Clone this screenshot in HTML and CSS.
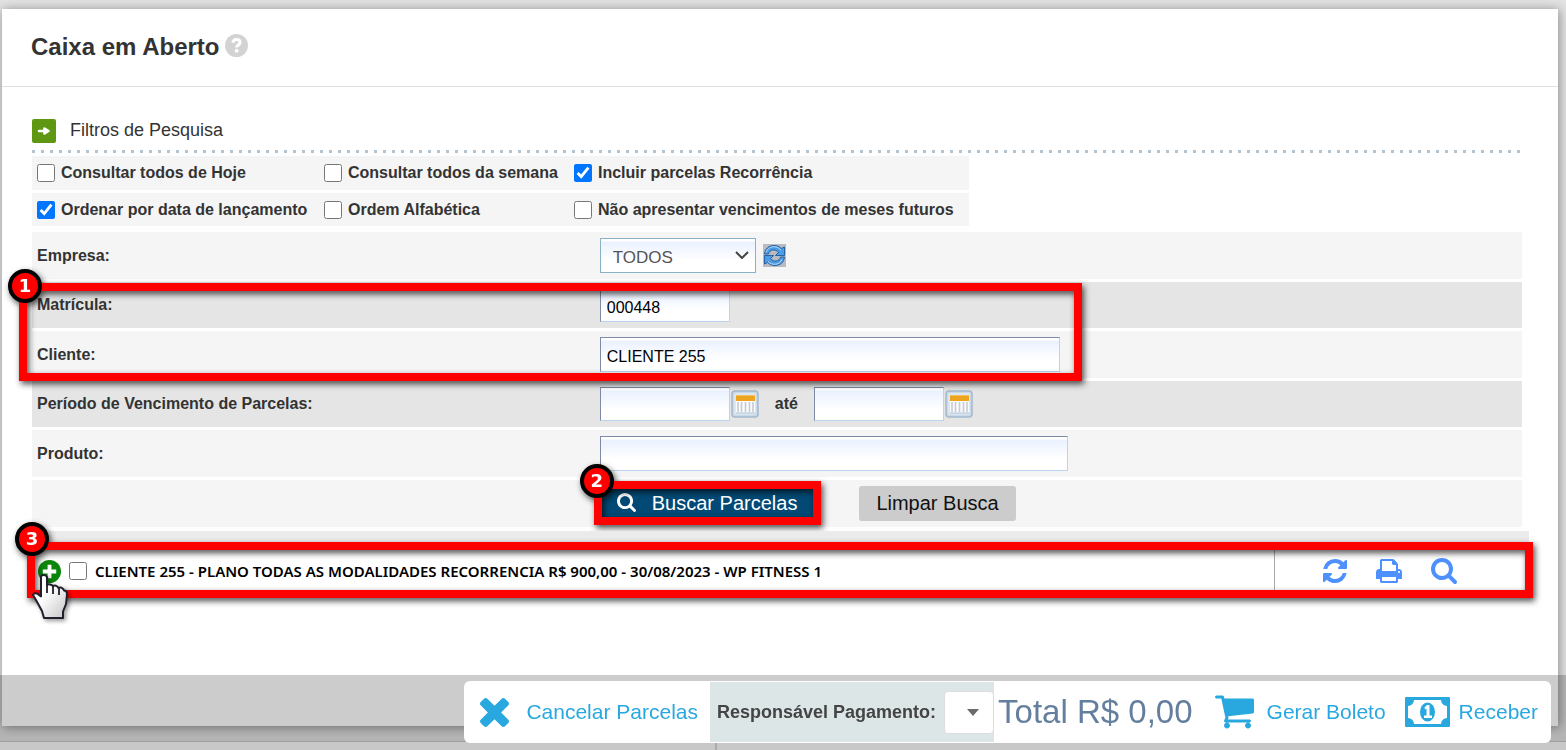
FILE: index.html
```html
<!DOCTYPE html>
<html lang="pt-BR">
<head>
<meta charset="utf-8">
<meta name="viewport" content="width=device-width, initial-scale=1">
<title>Caixa em Aberto</title>
<link rel="stylesheet" href="styles.css">
</head>
<body>
<svg class="defs" aria-hidden="true">
  <symbol id="i-search" viewBox="64 128 1664 1664"><path d="M1216 832q0-185-131.5-316.5t-316.5-131.5-316.5 131.5-131.5 316.5 131.5 316.5 316.5 131.5 316.5-131.5 131.5-316.5zm512 832q0 52-38 90t-90 38q-54 0-90-38l-343-342q-179 124-399 124-143 0-273.5-55.5t-225-150-150-225-55.5-273.5 55.5-273.5 150-225 225-150 273.5-55.5 273.5 55.5 225 150 150 225 55.5 273.5q0 220-124 399l343 343q37 37 37 90z"/></symbol>
  <symbol id="i-refresh" viewBox="128 128 1536 1536"><path d="M1639 1056q0 5-1 7-64 268-268 434.5t-478 166.500q-146 0-282.500-55t-243.500-157l-129 129q-19 19-45 19t-45-19-19-45v-448q0-26 19-45t45-19h448q26 0 45 19t19 45-19 45l-137 137q71 66 161 102t187 36q134 0 250-65t186-179q11-17 53-117 8-23 30-23h192q13 0 22.500 9.500t9.500 22.500zm25-800v448q0 26-19 45t-45 19h-448q-26 0-45-19t-19-45 19-45l138-138q-148-137-349-137-134 0-250 65t-186 179q-11 17-53 117-8 23-30 23h-199q-13 0-22.500-9.500t-9.500-22.500v-7q65-268 270-434.500t480-166.500q146 0 284 55.500t245 156.500l130-129q19-19 45-19t45 19 19 45z"/></symbol>
  <symbol id="i-print" viewBox="64 64 1664 1664"><path d="M448 1536h896v-256h-896v256zm0-640h896v-384h-160q-40 0-68-28t-28-68v-160h-640v640zm1152 64q0-26-19-45t-45-19-45 19-19 45 19 45 45 19 45-19 19-45zm128 0v416q0 13-9.500 22.500t-22.500 9.500h-224v160q0 40-28 68t-68 28h-960q-40 0-68-28t-28-68v-160h-224q-13 0-22.500-9.500t-9.500-22.500v-416q0-79 56.500-135.500t135.500-56.500h64v-544q0-40 28-68t68-28h672q40 0 88 20t76 48l152 152q28 28 48 76t20 88v256h64q79 0 135.500 56.500t56.500 135.500z"/></symbol>
  <symbol id="i-times" viewBox="302 366 1188 1188"><path d="M1490 1322q0 40-28 68l-136 136q-28 28-68 28t-68-28l-294-294-294 294q-28 28-68 28t-68-28l-136-136q-28-28-28-68t28-68l294-294-294-294q-28-28-28-68t28-68l136-136q28-28 68-28t68 28l294 294 294-294q28-28 68-28t68 28l136 136q28 28 28 68t-28 68l-294 294 294 294q28 28 28 68z"/></symbol>
  <symbol id="i-cart" viewBox="64 256 1664 1408"><path d="M704 1536q0 52-38 90t-90 38-90-38-38-90 38-90 90-38 90 38 38 90zm896 0q0 52-38 90t-90 38-90-38-38-90 38-90 90-38 90 38 38 90zm128-1088v512q0 24-16.500 42.500t-40.500 21.500l-1044 122q13 60 13 70 0 16-24 64h920q26 0 45 19t19 45-19 45-45 19h-1024q-26 0-45-19t-19-45q0-11 8-31.500t16-36 21.500-40 15.500-29.500l-177-823h-204q-26 0-45-19t-19-45 19-45 45-19h256q16 0 28.500 6.500t19.500 15.500 13 24.500 8 26 5.500 29.500 4.500 26h1201q26 0 45 19t19 45z"/></symbol>
  <symbol id="i-money" viewBox="0 0 45 30"><rect width="45" height="30" rx="1"/><path d="M9 3h27a6 6 0 0 0 6 6v12a6 6 0 0 0-6 6H9a6 6 0 0 0-6-6V9a6 6 0 0 0 6-6z" fill="#fff"/><ellipse cx="22.500" cy="15" rx="7.500" ry="9.500"/><path d="M19.500 10.500L22 8h2.500v10.500H27V21h-8v-2.500h2.500v-7L20 12.500z" fill="#fff"/></symbol>
  <symbol id="i-calendar" viewBox="0 0 28 28"><rect x="1" y="1" width="26" height="26" rx="3" fill="#c9d9e8" stroke="#a4b9cd" stroke-width="1.500"/><rect x="3" y="3" width="22" height="22" rx="2" fill="#dde7f0"/><rect x="5" y="5" width="19" height="18" fill="#fbfbfb"/><path d="M7 12v10M10.500 12v10M14.500 12v10M18.500 12v10M22 12v10" stroke="#c3cbd4" stroke-width="1.600"/><path d="M5 23h19" stroke="#adc2d6"/><rect x="5" y="5" width="19" height="6" fill="#eda421"/><path d="M5 5.500h19" stroke="#f4c05c"/></symbol>
</svg>

<main class="card">
  <header class="card-header">
    <h1>Caixa em Aberto</h1>
    <button class="help" type="button" aria-label="Ajuda">
      <svg viewBox="0 0 24 24"><circle cx="12" cy="12" r="12" fill="#d3d3d3"/><path d="M8.200 9.200C8.500 6.900 10 5.800 12 5.800c2.200 0 3.700 1.200 3.700 3 0 2.600-3.500 2.700-3.500 5.200" fill="none" stroke="#fff" stroke-width="3.200"/><rect x="10.400" y="15.800" width="3.600" height="3.400" fill="#fff"/></svg>
    </button>
  </header>

  <div class="content">
    <form class="filters">
      <h2>
        <svg viewBox="0 0 24 24"><rect width="24" height="24" rx="2" fill="#5f9713"/><path d="M7 12h8M12.500 9.500l4 2.500-4 2.500z" fill="#fff" stroke="#fff" stroke-width="2.600" stroke-linecap="round" stroke-linejoin="round"/></svg>
        <span>Filtros de Pesquisa</span>
      </h2>
      <div class="dots"></div>

      <div class="checks">
        <div class="check-row">
          <label><input type="checkbox">Consultar todos de Hoje</label>
          <label><input type="checkbox">Consultar todos da semana</label>
          <label><input type="checkbox" checked>Incluir parcelas Recorrência</label>
        </div>
        <div class="check-row">
          <label><input type="checkbox" checked>Ordenar por data de lançamento</label>
          <label><input type="checkbox">Ordem Alfabética</label>
          <label><input type="checkbox">Não apresentar vencimentos de meses futuros</label>
        </div>
      </div>

      <div class="rows">
        <div class="row">
          <label for="empresa">Empresa:</label>
          <div class="value">
            <span class="select-wrap">
              <select class="field company" id="empresa"><option>TODOS</option></select>
              <svg viewBox="0 0 14 8"><path d="M1 1l6 6 6-6" fill="none" stroke="#444" stroke-width="2"/></svg>
            </span>
            <button class="reload" type="button" aria-label="Atualizar">
              <svg viewBox="0 0 23 23"><rect width="23" height="23" fill="#b9bbc0"/><g fill="#4c9be3" stroke="#1d5b9f" stroke-width=".9"><path d="M1.500 10C2 4.500 6 1.500 11 1.500c3.200 0 5.600 1.200 7.300 3L21.500 3v8.500h-9l3-3.200C12 4.500 6.500 5.500 5.500 10z"/><path d="M21.500 13c-.5 5.500-4.500 8.500-9.500 8.500-3.200 0-5.600-1.200-7.300-3L1.500 20v-8.500h9l-3 3.200c3.500 3.800 9 2.800 10-1.700z"/></g><path d="M3 8.500C4.500 4 8 2.700 11 2.700c3 0 5 1.300 7 3.300M5 17.500c3.500 4 11.500 4 14-2" fill="none" stroke="#b8dcfb" stroke-width="1"/></svg>
            </button>
          </div>
        </div>
        <div class="row alt">
          <label for="matricula">Matrícula:</label>
          <div class="value"><input class="field short" id="matricula" type="text" value="000448"></div>
        </div>
        <div class="row">
          <label for="cliente">Cliente:</label>
          <div class="value"><input class="field client" id="cliente" type="text" value="CLIENTE 255"></div>
        </div>
        <div class="row alt">
          <label for="inicio">Período de Vencimento de Parcelas:</label>
          <div class="value">
            <input class="field short" id="inicio" type="text">
            <button class="calendar" type="button" aria-label="Escolher data inicial"><svg><use href="#i-calendar"/></svg></button>
            <label class="until" for="fim">até</label>
            <input class="field short" id="fim" type="text">
            <button class="calendar" type="button" aria-label="Escolher data final"><svg><use href="#i-calendar"/></svg></button>
          </div>
        </div>
        <div class="row">
          <label for="produto">Produto:</label>
          <div class="value"><input class="field product" id="produto" type="text"></div>
        </div>
        <div class="row">
          <span></span>
          <div class="value actions">
            <div class="search-wrap">
              <button class="btn primary" type="button"><svg><use href="#i-search"/></svg>Buscar Parcelas</button>
              <div class="frame frame-search"><span class="badge">2</span></div>
            </div>
            <button class="btn" type="button">Limpar Busca</button>
          </div>
        </div>
        <div class="frame frame-client"><span class="badge">1</span></div>
      </div>
    </form>

    <section class="results">
      <div class="results-head"></div>
      <div class="result">
        <button class="expand" type="button" aria-label="Expandir">
          <svg viewBox="0 0 24 24"><circle cx="12" cy="12" r="12" fill="#0a860a"/><path d="M12 5v14M5 12h14" stroke="#fff" stroke-width="4"/></svg>
        </button>
        <label class="result-label"><input type="checkbox">CLIENTE 255 - PLANO TODAS AS MODALIDADES RECORRENCIA R$ 900,00 - 30/08/2023 - WP FITNESS 1</label>
        <div class="tools">
          <button type="button" aria-label="Atualizar"><svg class="i-refresh"><use href="#i-refresh"/></svg></button>
          <button type="button" aria-label="Imprimir"><svg><use href="#i-print"/></svg></button>
          <button type="button" aria-label="Ver detalhes"><svg><use href="#i-search"/></svg></button>
        </div>
      </div>
      <div class="frame frame-result"><span class="badge">3</span></div>
      <svg class="pointer" viewBox="0 0 36 46" aria-hidden="true">
        <defs><linearGradient id="hand" x1="0" y1="0" x2="1" y2="1"><stop offset=".4" stop-color="#fff"/><stop offset="1" stop-color="#c4c4c4"/></linearGradient></defs>
        <path d="M9 3q0-2 2.500-2T15 3v8q1-1 3-.500t3 1.500q2-1 3.500 0t2 2q2-1 3.500 0t2 2.500q3 0 3 3.500l-1 10-3 7.500V44H12l-2-7-6-11-3-5q1-2.500 4-1.500l4 3z" fill="url(#hand)" stroke="#20202c" stroke-width="2" stroke-linejoin="round"/>
        <path d="M15 11v8M21 12v8M27 14v7" stroke="#20202c" stroke-width="1.800"/>
      </svg>
    </section>
  </div>
</main>

<div class="page-end"><div class="page-end-line"></div></div>

<footer class="footer">
  <div class="bar">
    <a class="bar-link cancel" href="#"><svg class="i-times"><use href="#i-times"/></svg>Cancelar Parcelas</a>
    <div class="payer">
      <label for="pagador">Responsável Pagamento:</label>
      <span class="payer-select"><select id="pagador"></select><svg viewBox="0 0 12 7"><path d="M0 0h12L6 7z" fill="#6b6b6b"/></svg></span>
    </div>
    <strong class="total">Total R$ 0,00</strong>
    <a class="bar-link boleto" href="#"><svg class="i-cart"><use href="#i-cart"/></svg>Gerar Boleto</a>
    <a class="bar-link receive" href="#"><svg class="i-money"><use href="#i-money"/></svg>Receber</a>
  </div>
</footer>
</body>
</html>
```

FILE: styles.css
```css
* { box-sizing: border-box; }

body {
  margin: 0;
  min-height: 100vh;
  padding: 9px 8px 0 2px;
  display: flex;
  flex-direction: column;
  background: #e2e2e2;
  color: #333;
  font: 16px/20px "Liberation Sans", Arial, sans-serif;
}

button {
  padding: 0;
  border: 0;
  background: none;
  color: inherit;
  font: inherit;
  cursor: pointer;
}

svg { display: block; flex: none; fill: currentColor; }
.defs { position: absolute; width: 0; height: 0; }

input[type="checkbox"] {
  width: 18px;
  height: 18px;
  margin: 0;
  flex: none;
  accent-color: #0075ff;
}

.card {
  flex: 1;
  background: #fff;
  box-shadow: 1px 1px 10px rgba(0, 0, 0, 0.4);
}

.card-header {
  display: flex;
  align-items: center;
  gap: 5px;
  height: 78px;
  padding: 0 29px 4px;
  border-bottom: 1px solid #e0e0e0;
}

.card-header h1 { margin: 0; padding-top: 2px; font-size: 24px; line-height: 28px; }
.help svg { width: 23px; height: 23px; }

.content { padding: 32px 29px 80px 30px; }
.filters { margin-right: 7px; }

.filters h2 {
  display: flex;
  gap: 14px;
  margin: 0 0 7px;
  font-size: 18px;
  font-weight: normal;
  line-height: 22px;
}

.filters h2 svg { width: 24px; height: 24px; }

.dots {
  height: 3px;
  margin-bottom: 3px;
  background: repeating-linear-gradient(90deg, #b0c4d4 0 3px, transparent 3px 9px);
}

.checks {
  display: grid;
  gap: 3px;
  width: 937px;
  max-width: 100%;
  margin-bottom: 6px;
}

.check-row {
  display: grid;
  grid-template-columns: 287px 250px 1fr;
  align-items: center;
  height: 34px;
  padding: 0 5px;
  background: #f5f5f5;
}

.check-row + .check-row { height: 33px; }

.check-row label {
  display: flex;
  align-items: center;
  gap: 6px;
  font-weight: bold;
  white-space: nowrap;
}

.rows { position: relative; display: grid; gap: 3px; }

.row {
  display: grid;
  grid-template-columns: 38fr 62fr;
  align-items: center;
  min-height: 47px;
  padding: 0 4px 0 5px;
  background: #f5f5f5;
}

.row.alt { min-height: 46px; background: #e5e5e5; }
.row label { font-weight: bold; }
.value { display: flex; align-items: center; }

.field {
  height: 35px;
  padding: 5px 6px 0;
  border: 1px solid #bcd3ef;
  border-top-color: #7d8ba8;
  border-left-color: #7d8ba8;
  border-radius: 0;
  background: linear-gradient(#fff 0 2px, #eaf1ff 3px, #fff 22px);
  color: #000;
  font: 16px/20px "Liberation Sans", Arial, sans-serif;
}

.short { width: 130px; height: 34px; }
.client { width: 460px; }
.product { width: 468px; }

.company {
  width: 156px;
  padding-left: 12px;
  border-color: #8ab2c6;
  color: #555;
  font-size: 17px;
  appearance: none;
}

.select-wrap { position: relative; }
.select-wrap svg { position: absolute; right: 7px; top: 13px; width: 14px; height: 8px; pointer-events: none; }
.reload { margin-left: 7px; }
.reload svg { width: 23px; height: 23px; }
.calendar { margin-left: 1px; }
.calendar svg { width: 28px; height: 28px; }
.until { margin: 0 16px; }

.actions { gap: 44px; }
.search-wrap { position: relative; }

.btn {
  display: flex;
  align-items: center;
  height: 35px;
  padding: 0 17px 2px;
  border-radius: 3px;
  background: #ccc;
  color: #111;
  font-size: 20px;
}

.btn.primary { gap: 16px; padding-right: 18px; background: #024a75; color: #fff; }
.btn.primary svg { width: 19px; height: 19px; }

/* Numbered step highlights */
.frame {
  position: absolute;
  border: 8px solid #f00;
  filter: drop-shadow(2px 3px 3px rgba(0, 0, 0, 0.7));
  pointer-events: none;
}

.frame-client { left: -13px; top: 51px; width: 1063px; height: 98px; }
.frame-search { left: -6px; right: -6px; top: -5px; height: 44px; }
.frame-result { left: -5px; right: -4px; top: 11px; height: 56px; }

.badge {
  position: absolute;
  left: -19px;
  top: -22px;
  width: 34px;
  height: 34px;
  border: 4px solid #000;
  border-radius: 50%;
  background: #f00;
  color: #fff;
  font: bold 18px/26px "DejaVu Sans", Verdana, sans-serif;
  text-align: center;
}

.frame-search .badge { left: -22px; top: -25px; }
.frame-result .badge { left: -20px; top: -28px; }

.results { position: relative; margin-top: 4px; }
.results-head { height: 17px; background: #ebebeb; }

.result {
  display: flex;
  align-items: center;
  height: 46px;
  padding-left: 6px;
}

.expand svg { width: 23px; height: 23px; }

.result-label {
  display: flex;
  flex: 1;
  align-items: center;
  gap: 8px;
  margin-left: 8px;
  color: #000;
  font: 600 15px/20px "Trebuchet MS", "Noto Sans", sans-serif;
}

.tools {
  display: flex;
  align-self: stretch;
  align-items: center;
  gap: 29px;
  width: 255px;
  padding-left: 48px;
  border-left: 1px solid #aaa;
  color: #4d90fe;
}

.tools svg { width: 26px; height: 26px; }
.tools .i-refresh { width: 24px; height: 24px; }

.pointer {
  position: absolute;
  left: 0;
  top: 43px;
  width: 36px;
  height: 46px;
  filter: drop-shadow(2px 2px 2px rgba(0, 0, 0, 0.4));
}

.page-end {
  display: flex;
  align-items: flex-end;
  justify-content: center;
  height: 24px;
  margin: 0 -8px 0 -2px;
  padding-right: 134px;
  background: linear-gradient(transparent 15px, #c8c8c8 15px 16px, #fafafa 16px);
}

.page-end-line { width: 2px; height: 8px; background: #d8d8d8; }

.footer {
  position: fixed;
  left: 0;
  right: 0;
  bottom: 0;
  display: flex;
  justify-content: flex-end;
  padding: 6px 15px 7px;
  background: rgba(0, 0, 0, 0.2);
}

.bar {
  display: flex;
  align-items: center;
  height: 62px;
  padding: 0 13px 0 16px;
  border-radius: 6px;
  background: #fff;
}

.bar-link {
  display: flex;
  align-items: center;
  color: #29a8e0;
  font-size: 21px;
  line-height: 24px;
  text-decoration: none;
  white-space: nowrap;
}

.cancel { gap: 17px; margin-right: 12px; }
.i-times { width: 29px; height: 29px; }
.boleto { gap: 13px; margin: 0 19px 0 22px; }
.i-cart { width: 39px; height: 34px; }
.receive { gap: 9px; }
.i-money { width: 45px; height: 30px; }

.payer {
  display: flex;
  align-items: center;
  gap: 8px;
  height: 60px;
  margin-right: 4px;
  padding-left: 7px;
  background: #dde6e7;
  color: #444;
  font-size: 18px;
  font-weight: bold;
  white-space: nowrap;
}

.payer-select { position: relative; }

.payer-select select {
  display: block;
  width: 50px;
  height: 43px;
  border: 1px solid #ddd;
  border-radius: 4px;
  background: #fff;
  appearance: none;
}

.payer-select svg { position: absolute; left: 23px; top: 18px; width: 12px; height: 7px; pointer-events: none; }

.total {
  color: #647f9e;
  font-size: 33px;
  font-weight: normal;
  line-height: 36px;
  white-space: nowrap;
}
```
